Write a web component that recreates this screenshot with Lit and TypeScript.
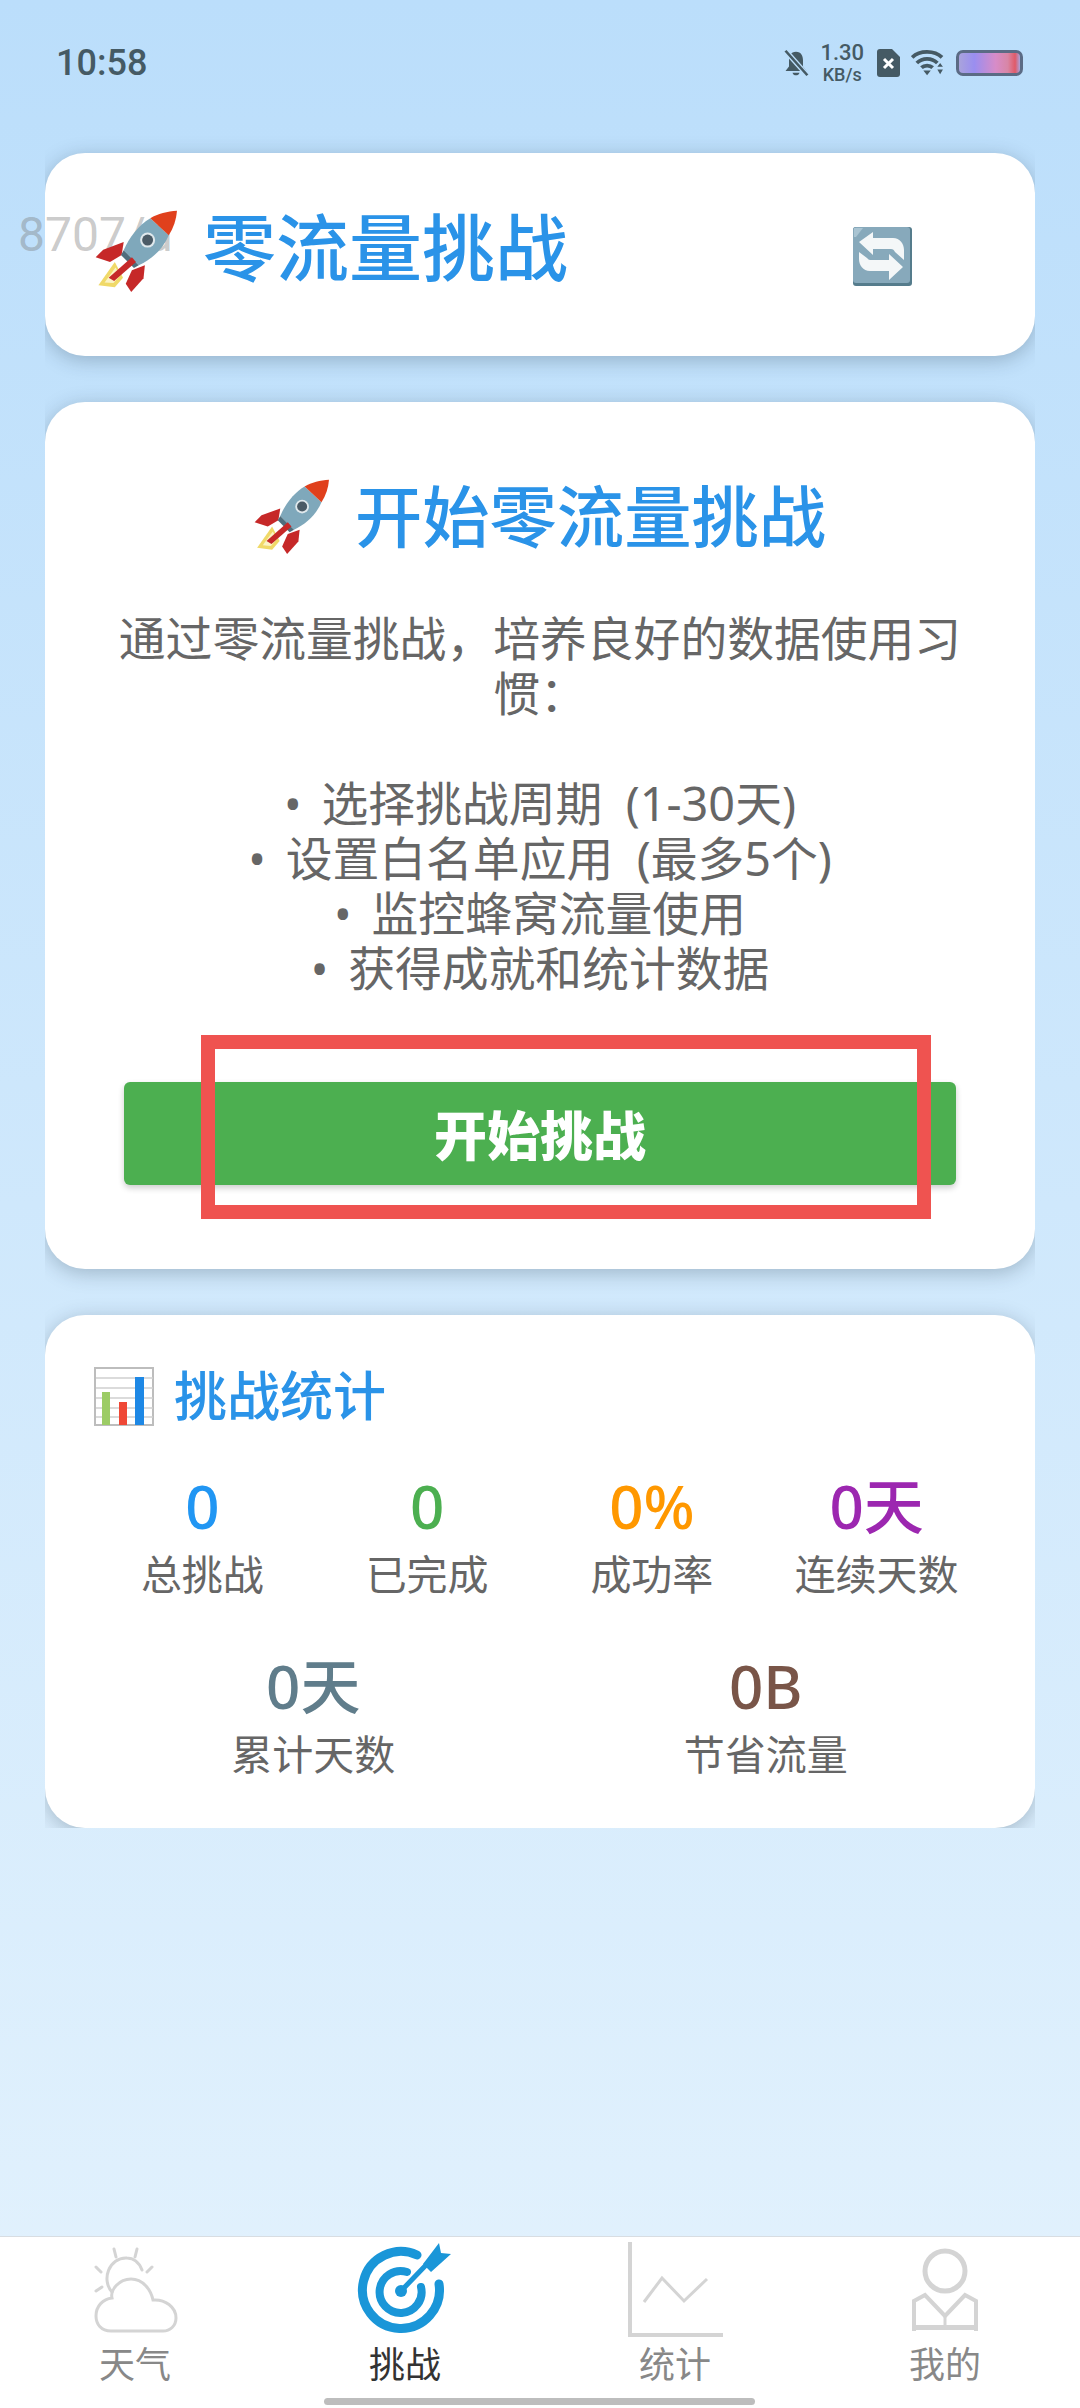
import { LitElement, html, css, svg } from 'lit';
import { customElement } from 'lit/decorators.js';

const rocket = svg`
  <path d="M29 76 L5 110 L29 113 L41 99 Z" fill="#f0d968"/>
  <path d="M30 84 L14 106 L27 107 L37 96 Z" fill="#fbf3c4"/>
  <path d="M42 47 L12 58 L1 69 L22 76 L39 66 Z" fill="#c62828"/>
  <path d="M73 81 L71 100 L53 120 L45 108 L54 88 Z" fill="#c62828"/>
  <path d="M42 59 C50 40 64 22 81 12 L108 37 C100 56 84 72 64 81 Z" fill="#7fa8bb"/>
  <path d="M42 59 L64 81 L57 85 L38 66 Z" fill="#4f6d7c"/>
  <path d="M81 12 C92 5 106 2 120 1 C119 14 115 26 108 37 Z" fill="#e0401c"/>
  <path d="M54 69 L60 76 L28 104 L20 99 Z" fill="#c62828"/>
  <circle cx="77" cy="44" r="11" fill="#dfe8ec"/>
  <circle cx="77" cy="44" r="8" fill="#4b5b66"/>
`;

const refresh = svg`
  <rect x="0" y="0" width="59" height="59" rx="3" fill="#557c8c"/>
  <rect x="0" y="0" width="57" height="56" rx="3" fill="#87a9bb"/>
  <path d="M1 1 H10 L3 10 H1 Z" fill="#a9c4d2"/>
  <path d="M6 15 L20 5 V11 H40 C47 11 51 17 51 23 V33 L42 25 C41 23 40 22 38 22 H20 V28 Z" fill="#f4f7f8"/>
  <path d="M50 40 L36 53 V44 H17 C10 44 6 38 6 32 V25 L14 31 C15 32 16 33 17 33 H36 V27 Z" fill="#f4f7f8"/>
`;

const barChart = svg`
  <rect x="1" y="1" width="58" height="57" fill="#fff" stroke="#bdbdbd" stroke-width="2"/>
  <path d="M2 11 H59 M2 21 H59 M2 31 H59 M2 41 H59 M2 50 H59" stroke="#d0d0d0" stroke-width="1.5"/>
  <rect x="8" y="25" width="8" height="33" fill="#9ccc65"/>
  <rect x="25" y="35" width="8" height="23" fill="#ef4836"/>
  <rect x="41" y="10" width="9" height="48" fill="#1e88e5"/>
`;

const navWeather = svg`
  <g fill="none" stroke="#d4d4d4" stroke-width="3" stroke-linecap="round">
    <path d="M29 7 L31 15 M52 7 L50 15 M11 25 L16 30 M67 25 L62 30 M11 49 L17 45"/>
    <path d="M27 50 C16 38 24 15 42 16 C48 16 54 20 57 28"/>
    <path d="M26 89 C16 89 11 82 11 74 C11 64 18 57 27 56 C25 48 34 37 46 37 C58 37 66 48 68 58 C80 57 91 65 91 76 C91 84 85 89 78 89 Z"/>
  </g>
`;

const navTarget = svg`
  <g fill="none" stroke="#1a96d8" stroke-linecap="round">
    <path d="M62 13 A38.5 38.5 0 1 0 84 42" stroke-width="9"/>
    <path d="M52 30 A21 21 0 1 0 66 45" stroke-width="8"/>
    <path d="M46 49 L72 22" stroke-width="5"/>
  </g>
  <circle cx="46" cy="49" r="6" fill="#1a96d8"/>
  <path d="M84 1 L86 11 L96 12 L76 30 L68 22 Z" fill="#1a96d8"/>
`;

const navChart = svg`
  <g fill="none" stroke="#d4d4d4">
    <path d="M5 0 V93 H98" stroke-width="4"/>
    <path d="M19 60 L37 36 L59 59 L82 37" stroke-width="3"/>
  </g>
`;

const navMine = svg`
  <g fill="none" stroke="#d4d4d4">
    <circle cx="50" cy="29" r="20" stroke-width="5"/>
    <path d="M19 89 V59 L30 53 L50 74 L70 53 L81 59 V89" stroke-width="4"/>
    <path d="M50 74 V84" stroke-width="3"/>
  </g>
  <rect x="19" y="83" width="62" height="5" fill="#d4d4d4"/>
`;

@customElement('stat-item')
export class StatItem extends LitElement {
  static properties = {
    value: { type: String },
    label: { type: String },
    color: { type: String },
  };

  value = '';
  label = '';
  color = '';

  static styles = css`
    :host {
      display: flex;
      flex-direction: column;
      align-items: center;
    }
    .value {
      font-size: 60px;
      line-height: 70px;
      font-weight: 500;
    }
    .label {
      margin-top: 5px;
      font-family: Roboto, 'Noto Sans CJK SC', sans-serif;
      font-size: 41px;
      line-height: 60px;
      color: #666;
    }
  `;

  render() {
    return html`
      <div class="value" style="color: ${this.color}">${this.value}</div>
      <div class="label">${this.label}</div>
    `;
  }
}

@customElement('app-root')
export class AppRoot extends LitElement {
  static styles = css`
    :host {
      display: flex;
      flex-direction: column;
      position: relative;
      height: 2408px;
      overflow: hidden;
      font-family: 'Noto Sans', 'Noto Sans CJK SC', sans-serif;
      background: linear-gradient(180deg, #bbdefb 0%, #e3f2fd 100%);
    }
    .status {
      display: flex;
      align-items: center;
      justify-content: space-between;
      height: 64px;
      padding: 31px 57px 0 56px;
      color: #455a64;
      font-family: Roboto, sans-serif;
    }
    .time {
      font-size: 36px;
      font-weight: 500;
    }
    .status-right {
      display: flex;
      align-items: center;
      gap: 11px;
    }
    .speed {
      display: flex;
      flex-direction: column;
      align-items: center;
      font-weight: 500;
      font-size: 22px;
      line-height: 23px;
      margin-right: 2px;
    }
    .speed small {
      font-size: 18px;
      line-height: 21px;
    }
    .battery {
      width: 67px;
      height: 26px;
      box-sizing: border-box;
      border: 3px solid #5b6b85;
      border-radius: 7px;
      background: linear-gradient(90deg, #a9a3dc 0%, #9a8ef0 25%, #d78cc8 60%, #d886a6 80%, #e05a68 92%, #a9a3dc 100%);
    }
    .main {
      flex: 1;
      display: flex;
      flex-direction: column;
      gap: 46px;
      padding: 58px 45px 0;
    }
    /* shadow only shows above and below the cards, the sides are cut off */
    .card {
      background: #fff;
      border-radius: 40px;
      box-shadow: 0 4px 20px rgba(30, 50, 70, 0.28);
      clip-path: inset(-40px 0 -40px 0);
    }
    .head-card {
      display: flex;
      align-items: center;
      height: 203px;
      padding-left: 158px;
    }
    .head-card h1 {
      flex: 1;
      margin: 0 0 15px;
      font-size: 73px;
      line-height: 90px;
      font-weight: 500;
      color: #2a93e8;
    }
    .head-card .swap {
      width: 59px;
      height: 59px;
      margin: 3px 123px 0 0;
    }
    .head-rocket {
      position: absolute;
      left: 95px;
      top: 210px;
      width: 82px;
      height: 82px;
    }
    .start-card {
      display: flex;
      flex-direction: column;
      align-items: center;
      height: 867px;
      box-sizing: border-box;
      padding: 67px 79px 0;
      text-align: center;
    }
    .start-title {
      display: flex;
      align-items: center;
      gap: 26px;
    }
    .start-title svg {
      width: 75px;
      height: 75px;
    }
    .start-title h2 {
      margin: 0;
      font-size: 67.3px;
      line-height: 94px;
      font-weight: 500;
      color: #2a93e8;
    }
    .desc {
      margin: 48px 0 0;
      width: 860px;
      font-size: 46.8px;
      line-height: 55px;
      color: #666;
      white-space: pre-line;
    }
    .start-btn {
      display: block;
      width: 100%;
      height: 103px;
      margin-top: 86px;
      border: 0;
      border-radius: 6px;
      background: #4caf50;
      box-shadow: 0 3px 6px rgba(0, 0, 0, 0.2);
      color: #fff;
      font-family: inherit;
      font-size: 53px;
      font-weight: 900;
    }
    .mark {
      position: absolute;
      left: 201px;
      top: 1035px;
      width: 730px;
      height: 184px;
      box-sizing: border-box;
      border: 14px solid #ef5350;
      pointer-events: none;
    }
    .watermark {
      position: absolute;
      left: 18px;
      top: 203px;
      font-family: Roboto, sans-serif;
      font-size: 48px;
      line-height: 64px;
      color: rgba(120, 120, 120, 0.4);
      width: 156px;
      overflow: hidden;
      white-space: nowrap;
    }
    .stats-card {
      height: 513px;
      box-sizing: border-box;
      padding: 47px 46px 0 49px;
      clip-path: inset(-40px 0 0 0);
    }
    .stats-title {
      display: flex;
      align-items: center;
      gap: 20px;
    }
    .stats-title svg {
      width: 60px;
      height: 59px;
    }
    .stats-title h3 {
      margin: 0;
      font-size: 53px;
      line-height: 68px;
      font-weight: 500;
      color: #2a93e8;
    }
    .row4 {
      display: grid;
      grid-template-columns: repeat(4, 1fr);
      margin: 41px 0 0 -4px;
    }
    .row2 {
      display: grid;
      grid-template-columns: repeat(2, 1fr);
      margin: 45px -3px 0 -7px;
    }
    nav {
      display: grid;
      grid-template-columns: repeat(4, 1fr);
      height: 171px;
      background: #fff;
      border-top: 1px solid #d8dde2;
    }
    .tab {
      display: flex;
      flex-direction: column;
      align-items: center;
      padding-top: 5px;
      font-size: 36px;
      line-height: 54px;
      color: #888;
    }
    .tab.active {
      color: #333;
    }
    .tab svg {
      width: 100px;
      height: 96px;
    }
    .home-bar {
      position: absolute;
      left: 324px;
      top: 2398px;
      width: 431px;
      height: 7px;
      border-radius: 4px;
      background: #bdbdbd;
    }
  `;

  render() {
    return html`
      <div class="status">
        <span class="time">10:58</span>
        <div class="status-right">
          <svg width="26" height="28" viewBox="0 0 28 32">
            <path d="M14 3 C8 3 6 8 6 13 V20 L2 25 H26 L22 20 V13 C22 8 20 3 14 3 Z M10 27 C11 31 17 31 18 27 Z" fill="#455a64"/>
            <path d="M2 2 L27 30" stroke="#bbdefb" stroke-width="6"/>
            <path d="M2 2 L27 30" stroke="#455a64" stroke-width="3"/>
          </svg>
          <div class="speed"><span>1.30</span><small>KB/s</small></div>
          <svg width="23" height="28" viewBox="0 0 23 28">
            <path d="M3 0 H15 L23 8 V25 C23 27 22 28 20 28 H3 C1 28 0 27 0 25 V3 C0 1 1 0 3 0 Z" fill="#455a64"/>
            <path d="M7 10 L16 19 M16 10 L7 19" stroke="#fff" stroke-width="3"/>
          </svg>
          <svg width="34" height="28" viewBox="0 0 36 30">
            <g fill="none" stroke="#455a64" stroke-width="4">
              <path d="M1 9 C9 1 25 1 33 9"/>
              <path d="M6 15 C12 9 22 9 28 15"/>
              <path d="M11 20 C14 17 20 17 23 20"/>
            </g>
            <path d="M13 23 H21 L17 28 Z M28 19 L31 15 L34 19 Z M28 22 H34 L31 27 Z" fill="#455a64"/>
          </svg>
          <div class="battery"></div>
        </div>
      </div>

      <div class="main">
        <div class="card head-card">
          <h1>零流量挑战</h1>
          <svg class="swap" viewBox="0 0 59 59">${refresh}</svg>
        </div>

        <div class="card start-card">
          <div class="start-title">
            <svg viewBox="0 0 120 120">${rocket}</svg>
            <h2>开始零流量挑战</h2>
          </div>
          <p class="desc">通过零流量挑战，培养良好的数据使用习惯：

•&thinsp; 选择挑战周期&ensp;(1-30天)
•&thinsp; 设置白名单应用&ensp;(最多5个)
•&thinsp; 监控蜂窝流量使用
•&thinsp; 获得成就和统计数据</p>
          <button class="start-btn">开始挑战</button>
        </div>

        <div class="card stats-card">
          <div class="stats-title">
            <svg viewBox="0 0 60 59">${barChart}</svg>
            <h3>挑战统计</h3>
          </div>
          <div class="row4">
            <stat-item value="0" label="总挑战" color="#2196f3"></stat-item>
            <stat-item value="0" label="已完成" color="#4caf50"></stat-item>
            <stat-item value="0%" label="成功率" color="#ff9800"></stat-item>
            <stat-item value="0天" label="连续天数" color="#9c27b0"></stat-item>
          </div>
          <div class="row2">
            <stat-item value="0天" label="累计天数" color="#607d8b"></stat-item>
            <stat-item value="0B" label="节省流量" color="#795548"></stat-item>
          </div>
        </div>
      </div>

      <nav>
        <div class="tab"><svg viewBox="0 0 100 96">${navWeather}</svg>天气</div>
        <div class="tab active"><svg viewBox="0 0 100 96">${navTarget}</svg>挑战</div>
        <div class="tab"><svg viewBox="0 0 100 96">${navChart}</svg>统计</div>
        <div class="tab"><svg viewBox="0 0 100 96">${navMine}</svg>我的</div>
      </nav>

      <div class="watermark">8707/d</div>
      <svg class="head-rocket" viewBox="0 0 120 120">${rocket}</svg>
      <div class="mark"></div>
      <div class="home-bar"></div>
    `;
  }
}
